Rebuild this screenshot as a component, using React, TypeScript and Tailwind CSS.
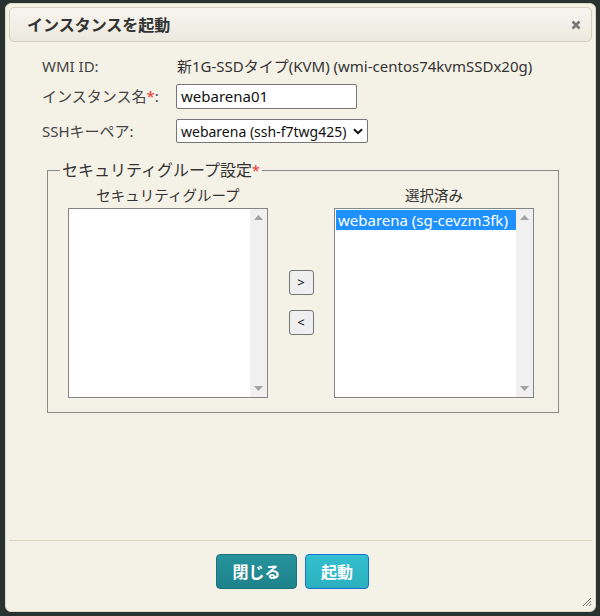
import React from "react";

const font = { fontFamily: '"Noto Sans", "Noto Sans CJK JP", sans-serif' };

function ListBox({ items, selected }: { items: string[]; selected?: number }) {
    return (
        <div className="flex w-[200px] h-[190px] border border-[#858585] bg-white">
            <div className="flex-1 min-w-0 pt-[1px] pl-[1px]">
                {items.map((it, i) => (
                    <div
                        key={it}
                        className={`h-[20px] leading-[20px] pl-[2px] text-[15px] whitespace-nowrap ${
                            i === selected ? "bg-[#1e90ff] text-white" : "text-[#222]"
                        }`}
                    >
                        {it}
                    </div>
                ))}
            </div>
            <div className="w-[17px] bg-[#f0f0f0] flex flex-col justify-between items-center py-[6px]">
                <svg width="9" height="5" viewBox="0 0 9 5">
                    <path d="M0 5 L4.5 0 L9 5 Z" fill="#a3a3a3" />
                </svg>
                <svg width="9" height="5" viewBox="0 0 9 5">
                    <path d="M0 0 L4.5 5 L9 0 Z" fill="#a3a3a3" />
                </svg>
            </div>
        </div>
    );
}

function MoveButton({ label }: { label: string }) {
    return (
        <div className="w-[25px] h-[25px] rounded-[3px] border border-[#767676] bg-[#efefef] flex items-center justify-center text-[13px] text-black leading-none">
            {label}
        </div>
    );
}

export default function App() {
    return (
        <div className="w-[600px] h-[616px] bg-[#28332f] pt-[3px] pl-[5px] pr-[4px] pb-[4px]" style={font}>
            <div className="relative w-full h-full rounded-[6px] border border-[#ddd7c3] bg-[#f4f1e6] flex flex-col text-[#333]">
                {/* title bar */}
                <div className="mx-[3px] mt-[3px] h-[35px] rounded-[5px] border border-[#d6d0b9] bg-gradient-to-b from-[#f7f5ef] to-[#ece9df] flex items-center justify-between pl-[17px] pr-[10px]">
                    <span className="text-[16px] font-bold text-[#333] leading-none">インスタンスを起動</span>
                    <svg width="10" height="10" viewBox="0 0 10 10">
                        <path d="M1.5 1.5 L8.5 8.5 M8.5 1.5 L1.5 8.5" stroke="#777" strokeWidth="2.6" />
                    </svg>
                </div>

                {/* content */}
                <div className="flex-1 pl-[36px] pt-[13px]">
                    <div className="flex items-center h-[22px] text-[15px]">
                        <span className="w-[135px] text-[#444]">WMI ID:</span>
                        <span className="text-[#333]">新1G-SSDタイプ(KVM) (wmi-centos74kvmSSDx20g)</span>
                    </div>
                    <div className="flex items-center mt-[7px] h-[24px] text-[15px]">
                        <span className="w-[134px] text-[#444]">
                            インスタンス名<span className="text-[#e33]">*</span>:
                        </span>
                        <div className="w-[181px] h-[25px] border border-[#767676] rounded-[2px] bg-white flex items-center pl-[4px] text-[#111]">
                            webarena01
                        </div>
                    </div>
                    <div className="flex items-center mt-[11px] h-[24px] text-[15px]">
                        <span className="w-[134px] text-[#444]">SSHキーペア:</span>
                        <div className="w-[192px] h-[24px] border border-[#767676] rounded-[2px] bg-white flex items-center justify-between pl-[4px] pr-[4px] text-[#111] whitespace-nowrap overflow-hidden">
                            <span className="text-[14px]">webarena (ssh-f7twg425)</span>
                            <svg className="shrink-0" width="10" height="7" viewBox="0 0 10 7">
                                <path d="M1 1.2 L5 5.2 L9 1.2" stroke="#111" strokeWidth="2" fill="none" />
                            </svg>
                        </div>
                    </div>

                    <fieldset className="mt-[18px] ml-[5px] w-[512px] h-[252px] border border-[#8a8a8a] px-[12px]">
                        <legend className="px-[2px] text-[16px] leading-[18px] text-[#333]">
                            セキュリティグループ設定<span className="text-[#e33] text-[14px]">*</span>
                        </legend>
                        <div className="flex pl-[8px] mt-[6px]">
                            <div className="flex flex-col items-center">
                                <div className="text-[14.5px] text-[#333] leading-[18px] mb-[4px]">セキュリティグループ</div>
                                <ListBox items={[]} />
                            </div>
                            <div className="w-[66px] flex flex-col items-center justify-center gap-[15px] pt-[21px]">
                                <MoveButton label=">" />
                                <MoveButton label="<" />
                            </div>
                            <div className="flex flex-col items-center">
                                <div className="text-[14.5px] text-[#333] leading-[18px] mb-[4px]">選択済み</div>
                                <ListBox items={["webarena (sg-cevzm3fk)"]} selected={0} />
                            </div>
                        </div>
                    </fieldset>
                </div>

                {/* button pane */}
                <div className="mx-[3px] border-t border-[#ddd8c4] h-[71px] flex items-start pt-[13px] pl-[207px] gap-[8px]">
                    <div className="w-[81px] h-[35px] rounded-[4px] border border-[#1c727a] bg-gradient-to-b from-[#26939c] to-[#1e828b] flex items-center justify-center text-white font-bold text-[16px]">
                        閉じる
                    </div>
                    <div className="w-[64px] h-[35px] rounded-[4px] border border-[#1a6fdc] bg-gradient-to-b from-[#33bfcf] to-[#2cb0bf] flex items-center justify-center text-white font-bold text-[16px]">
                        起動
                    </div>
                </div>

                {/* resize grip */}
                <svg className="absolute right-[3px] bottom-[4px]" width="10" height="10" viewBox="0 0 10 10">
                    <path d="M1 9 L9 1 M4 9 L9 4 M7 9 L9 7" stroke="#777" strokeWidth="1" />
                </svg>
            </div>
        </div>
    );
}
